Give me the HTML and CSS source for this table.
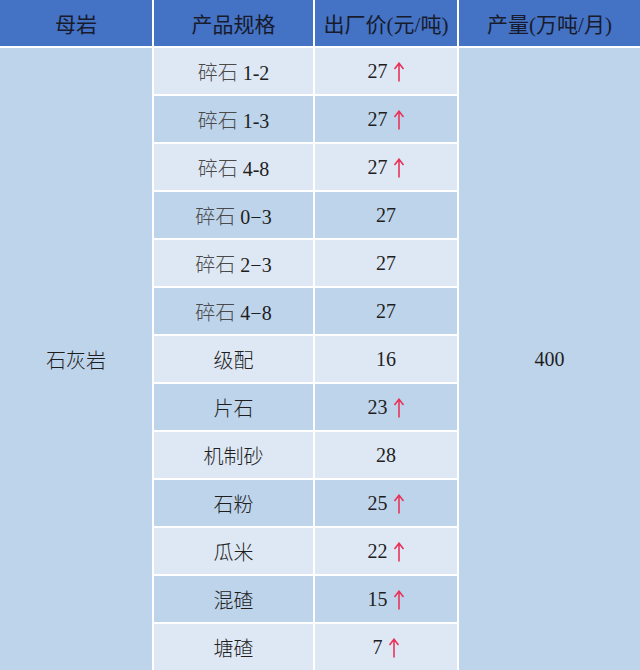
FILE: index.html
```html
<!DOCTYPE html>
<html lang="zh">
<head>
<meta charset="utf-8">
<link rel="stylesheet" href="styles.css">
</head>
<body>
<table class="price-table">
  <colgroup>
    <col class="c1"><col class="c2"><col class="c3"><col class="c4">
  </colgroup>
  <thead>
    <tr><th>母岩</th><th>产品规格</th><th>出厂价(元/吨)</th><th>产量(万吨/月)</th></tr>
  </thead>
  <tbody>
    <tr class="odd"><td class="merged cjk" rowspan="13">石灰岩</td><td><span class="cjk">碎石</span> 1-2</td><td>27 <svg class="up" viewBox="0 0 12 20" width="12" height="20"><path d="M6 19.5V1.5M1.5 7L6 1.2L10.5 7"/></svg></td><td class="merged" rowspan="13">400</td></tr>
    <tr class="even"><td><span class="cjk">碎石</span> 1-3</td><td>27 <svg class="up" viewBox="0 0 12 20" width="12" height="20"><path d="M6 19.5V1.5M1.5 7L6 1.2L10.5 7"/></svg></td></tr>
    <tr class="odd"><td><span class="cjk">碎石</span> 4-8</td><td>27 <svg class="up" viewBox="0 0 12 20" width="12" height="20"><path d="M6 19.5V1.5M1.5 7L6 1.2L10.5 7"/></svg></td></tr>
    <tr class="even"><td><span class="cjk">碎石</span> 0−3</td><td>27</td></tr>
    <tr class="odd"><td><span class="cjk">碎石</span> 2−3</td><td>27</td></tr>
    <tr class="even"><td><span class="cjk">碎石</span> 4−8</td><td>27</td></tr>
    <tr class="odd"><td class="cjk">级配</td><td>16</td></tr>
    <tr class="even"><td class="cjk">片石</td><td>23 <svg class="up" viewBox="0 0 12 20" width="12" height="20"><path d="M6 19.5V1.5M1.5 7L6 1.2L10.5 7"/></svg></td></tr>
    <tr class="odd"><td class="cjk">机制砂</td><td>28</td></tr>
    <tr class="even"><td class="cjk">石粉</td><td>25 <svg class="up" viewBox="0 0 12 20" width="12" height="20"><path d="M6 19.5V1.5M1.5 7L6 1.2L10.5 7"/></svg></td></tr>
    <tr class="odd"><td class="cjk">瓜米</td><td>22 <svg class="up" viewBox="0 0 12 20" width="12" height="20"><path d="M6 19.5V1.5M1.5 7L6 1.2L10.5 7"/></svg></td></tr>
    <tr class="even"><td class="cjk">混碴</td><td>15 <svg class="up" viewBox="0 0 12 20" width="12" height="20"><path d="M6 19.5V1.5M1.5 7L6 1.2L10.5 7"/></svg></td></tr>
    <tr class="odd"><td class="cjk">塘碴</td><td>7 <svg class="up" viewBox="0 0 12 20" width="12" height="20"><path d="M6 19.5V1.5M1.5 7L6 1.2L10.5 7"/></svg></td></tr>
  </tbody>
</table>
</body>
</html>
```
FILE: styles.css
```css
html, body {
  margin: 0;
  padding: 0;
  background: #ffffff;
}
.price-table {
  width: 640px;
  border-collapse: collapse;
  border-style: hidden;
  table-layout: fixed;
  font-family: "Liberation Serif", "Noto Sans CJK SC", serif;
  font-size: 20px;
  color: #1a1a1a;
}
.c1 { width: 153px; }
.c2 { width: 161px; }
.c3 { width: 144px; }
.c4 { width: 182px; }
.price-table th,
.price-table td {
  border: 2px solid #ffffff;
  text-align: center;
  vertical-align: middle;
  padding: 0;
}
.price-table thead tr { height: 47px; }
.price-table th {
  background: #4472c4;
  font-family: "Liberation Serif", "Noto Sans CJK SC", serif;
  font-weight: normal;
  font-size: 21px;
  color: #171b2c;
}
.price-table tbody tr { height: 48px; }
.price-table td { color: #1e1e1e; }
.cjk {
  font-family: "Noto Sans CJK SC", sans-serif;
  font-weight: 300;
  color: #4a4a4a;
}
.odd td { background: #dee8f4; }
.even td { background: #bed4ea; }
.price-table td.merged { background: #bed4ea; }
.up {
  display: inline-block;
  vertical-align: -4px;
  fill: none;
  stroke: #e8345a;
  stroke-width: 1.6;
}
```
